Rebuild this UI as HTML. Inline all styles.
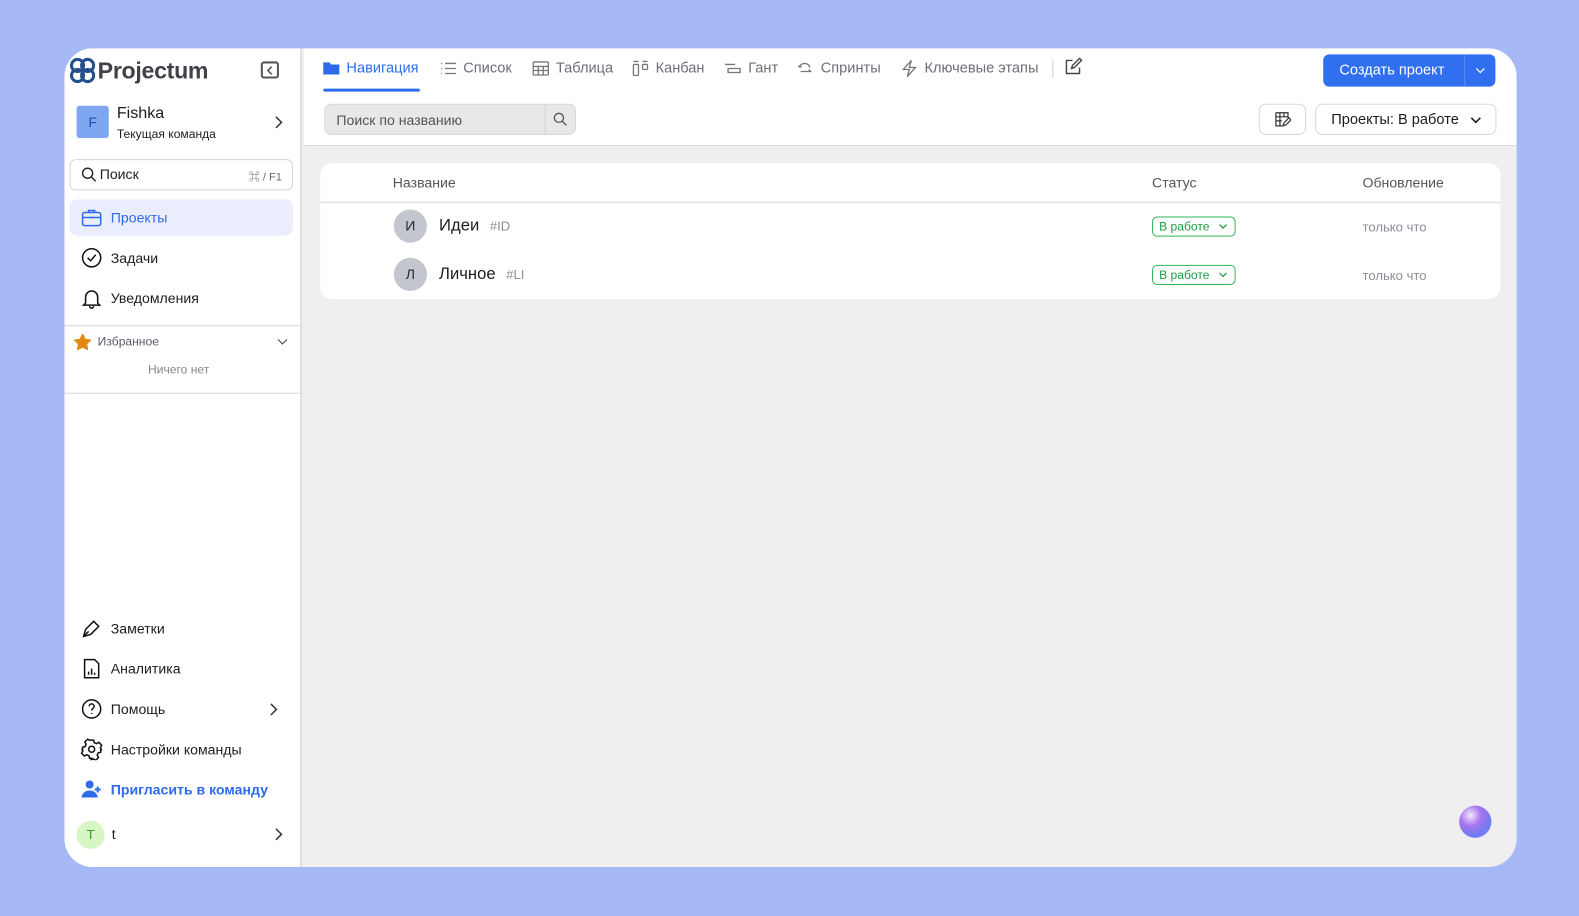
<!DOCTYPE html>
<html><head><meta charset="utf-8"><style>
*{box-sizing:border-box;margin:0;padding:0}
body{width:1579px;height:916px;background:#a6b8f6;font-family:"Liberation Sans","Noto Sans CJK SC",sans-serif;position:relative;overflow:hidden;color:#1d1d1f}
.wrap{position:absolute;left:0;top:0;width:1568px;height:910px;transform:scale(1.00702);transform-origin:0 0}
.win{position:absolute;left:64px;top:48px;width:1442px;height:813px;background:#efefef;border-radius:28px;overflow:hidden}
.side{position:absolute;left:0;top:0;width:236px;height:813px;background:#fff;border-right:2px solid #dedee2}
.abs{position:absolute}
.ni{position:absolute;left:16px;font-size:14px;display:flex;align-items:center;gap:8px}
.ni svg{width:22px;height:22px}
.top{position:absolute;left:238px;top:0;right:0;height:97px;background:#fff;border-bottom:1px solid #dcdce0}
.tab{position:absolute;top:11px;font-size:14.5px;color:#6b6f78;display:flex;align-items:center;gap:6px}
.tab svg{width:18px;height:18px}
.card{position:absolute;left:254px;top:114px;width:1172px;height:135px;background:#fff;border-radius:12px}
.gray{color:#8b8e96}
.badge{position:absolute;left:826px;border:1px solid #2fb457;color:#1f9a46;border-radius:5px;font-size:12px;padding:1px 6px;height:20px;line-height:16px;width:83px}
.badge svg{position:absolute;right:7px;top:6px}
.av{position:absolute;left:73px;width:33px;height:33px;border-radius:50%;background:#c3c6cf;font-size:14px;text-align:center;line-height:33px;color:#2a2a2e}
.chev{position:absolute}
</style></head><body>
<div class="wrap">
<div class="win">
 <div class="side">
  <svg class="abs" style="left:3px;top:8px" width="30" height="28" viewBox="0 0 30 28"><g fill="none" stroke="#234f8c" stroke-width="3"><circle cx="10" cy="9" r="6"/><circle cx="20" cy="9" r="6"/><circle cx="10" cy="19" r="6"/><circle cx="20" cy="19" r="6"/></g></svg>
  <div class="abs" style="left:33px;top:9px;font-size:23px;font-weight:bold;color:#3f4247;letter-spacing:-0.3px">Projectum</div>
  <div class="abs" style="left:195px;top:13px;width:18px;height:17px;border:2px solid #555;border-radius:3px;background:#fff"><svg style="position:absolute;left:4px;top:3px" width="6" height="8" viewBox="0 0 6 8"><path d="M5 0L1 4l4 4" fill="none" stroke="#555" stroke-width="1.6"/></svg></div>
  <div class="abs" style="left:12px;top:57px;width:32px;height:32px;background:#7ea6f1;border-radius:3px;color:#1f4fb8;text-align:center;line-height:32px;font-size:14px">F</div>
  <div class="abs" style="left:52px;top:56px;font-size:16px">Fishka</div>
  <div class="abs" style="left:52px;top:78px;font-size:12px">Текущая команда</div>
  <svg class="chev" style="left:209px;top:67px" width="8" height="13" viewBox="0 0 8 13"><path d="M1 1l5.5 5.5L1 12" fill="none" stroke="#333" stroke-width="1.5"/></svg>
  <div class="abs" style="left:5px;top:110px;width:222px;height:31px;border:1px solid #d5d5da;border-radius:6px"></div>
  <svg class="abs" style="left:17px;top:118px" width="15" height="15" viewBox="0 0 15 15"><circle cx="6" cy="6" r="5" fill="none" stroke="#222" stroke-width="1.4"/><path d="M10 10l4 4" stroke="#222" stroke-width="1.4"/></svg>
  <div class="abs" style="left:35px;top:117px;font-size:14px">Поиск</div>
  <div class="abs" style="left:183px;top:119px;font-size:11px;color:#666">⌘ / F1</div>
  <div class="abs" style="left:5px;top:150px;width:222px;height:36px;background:#eaedfc;border-radius:8px"></div>
  <div class="ni" style="top:157px;color:#2e6bea"><svg viewBox="0 0 22 22" fill="none" stroke="#2e6bea" stroke-width="1.5"><rect x="2" y="6" width="18" height="13" rx="2"/><path d="M8 6V4h6v2M2 11h18M11 10v2"/></svg>Проекты</div>
  <div class="ni" style="top:197px"><svg viewBox="0 0 22 22" fill="none" stroke="#111" stroke-width="1.5"><circle cx="11" cy="11" r="9"/><path d="M7 11l3 3 5-6"/></svg>Задачи</div>
  <div class="ni" style="top:237px"><svg viewBox="0 0 22 22" fill="none" stroke="#111" stroke-width="1.5"><path d="M5 16V10a6 6 0 0112 0v6l2 2H3z M9 19a2 2 0 004 0"/></svg>Уведомления</div>
  <div class="abs" style="left:0;top:275px;width:236px;height:1px;background:#d8d8dc"></div>
  <svg class="abs" style="left:9px;top:283px" width="18" height="17" viewBox="0 0 24 23"><path d="M12 1l3.4 7 7.6 1-5.5 5.3 1.3 7.6L12 18.3 5.2 21.9l1.3-7.6L1 9l7.6-1z" fill="#e08a10" stroke="#e08a10" stroke-linejoin="round" stroke-width="1.5"/></svg>
  <div class="abs" style="left:33px;top:284px;font-size:12px;color:#555a66">Избранное</div>
  <svg class="chev" style="left:211px;top:288px" width="11" height="7" viewBox="0 0 11 7"><path d="M1 1l4.5 4.5L10 1" fill="none" stroke="#555" stroke-width="1.2"/></svg>
  <div class="abs" style="left:83px;top:312px;font-size:12px;color:#888">Ничего нет</div>
  <div class="abs" style="left:0;top:342px;width:236px;height:1px;background:#d8d8dc"></div>
  <div class="ni" style="top:565px"><svg viewBox="0 0 22 22" fill="none" stroke="#111" stroke-width="1.5"><path d="M3 19l2-7 8-8 5 5-8 8z M3 19l5-5"/></svg>Заметки</div>
  <div class="ni" style="top:605px"><svg viewBox="0 0 22 22" fill="none" stroke="#111" stroke-width="1.5"><path d="M4 2h10l4 4v14H4z M8 17v-3M11 17v-6M14 17v-2"/></svg>Аналитика</div>
  <div class="ni" style="top:645px"><svg viewBox="0 0 22 22" fill="none" stroke="#111" stroke-width="1.5"><circle cx="11" cy="11" r="9"/><path d="M8.5 8.5a2.5 2.5 0 115 0c0 2-2.5 2-2.5 4M11 15v1"/></svg>Помощь</div>
  <svg class="chev" style="left:204px;top:650px" width="8" height="13" viewBox="0 0 8 13"><path d="M1 1l5.5 5.5L1 12" fill="none" stroke="#333" stroke-width="1.5"/></svg>
  <div class="ni" style="top:685px"><svg viewBox="0 0 22 22" fill="none" stroke="#111" stroke-width="1.5"><circle cx="11" cy="11" r="3"/><path d="M9 2h4l.6 2.5 2.3 1 2.3-1.3 2.8 2.8-1.3 2.3 1 2.3L20 12v-2 4l-2.5.6-1 2.3 1.3 2.3-2.8 2.8-2.3-1.3-2.3 1L11 20H9l-.6-2.5-2.3-1-2.3 1.3-2.8-2.8 1.3-2.3-1-2.3L2 13V9l2.5-.6 1-2.3L4.2 3.8 7 1 9.3 2.3z"/></svg>Настройки команды</div>
  <div class="ni" style="top:725px;color:#2e6bea;font-weight:bold"><svg viewBox="0 0 22 22" fill="#2e6bea"><circle cx="9" cy="6" r="4"/><path d="M1 19a8 7 0 0116 0z"/><path d="M17 8v6M14 11h6" stroke="#2e6bea" stroke-width="2"/></svg>Пригласить в команду</div>
  <div class="abs" style="left:12px;top:767px;width:28px;height:28px;border-radius:50%;background:#d8f5c4;color:#3a9b22;text-align:center;line-height:28px;font-size:13px">T</div>
  <div class="abs" style="left:47px;top:772px;font-size:14px">t</div>
  <svg class="chev" style="left:209px;top:774px" width="8" height="13" viewBox="0 0 8 13"><path d="M1 1l5.5 5.5L1 12" fill="none" stroke="#333" stroke-width="1.5"/></svg>
 </div>
 <div class="top">
  <div class="tab" style="left:18px;color:#2e6bea"><svg viewBox="0 0 18 18" fill="#2e6bea"><path d="M1 3h6l2 2h8v10H1z"/></svg>Навигация</div>
  <div class="abs" style="left:19px;top:40px;width:96px;height:3px;background:#2e6bea;border-radius:2px"></div>
  <div class="tab" style="left:134px"><svg viewBox="0 0 18 18" stroke="#777" stroke-width="1.3"><path d="M6 4h11M6 9h11M6 14h11M2 4h1M2 9h1M2 14h1"/></svg>Список</div>
  <div class="tab" style="left:226px"><svg viewBox="0 0 18 18" fill="none" stroke="#777" stroke-width="1.3"><rect x="1.5" y="2.5" width="15" height="13" rx="1"/><path d="M1.5 7h15M1.5 11h15M6.5 7v8.5M11.5 7v8.5"/></svg>Таблица</div>
  <div class="tab" style="left:325px"><svg viewBox="0 0 18 18" fill="none" stroke="#777" stroke-width="1.3"><path d="M2 2h5M11 2h5"/><rect x="2" y="5" width="5" height="11" rx="1"/><rect x="11" y="5" width="5" height="5" rx="1"/></svg>Канбан</div>
  <div class="tab" style="left:417px"><svg viewBox="0 0 18 18" fill="none" stroke="#777" stroke-width="1.3"><path d="M1 5h10M4 9h12v4H4z"/></svg>Гант</div>
  <div class="tab" style="left:489px"><svg viewBox="0 0 18 18" fill="none" stroke="#777" stroke-width="1.3"><path d="M3 8a5 4 0 0110 0M3 8l-1-2M3 8l2-1M4 12h10l-2-2"/></svg>Спринты</div>
  <div class="tab" style="left:592px"><svg viewBox="0 0 18 18" fill="none" stroke="#777" stroke-width="1.3"><path d="M11 1L3 10h6l-2 7 8-9H9z"/></svg>Ключевые этапы</div>
  <div class="abs" style="left:743px;top:12px;width:1px;height:17px;background:#ccc"></div>
  <svg class="abs" style="left:755px;top:9px" width="18" height="18" viewBox="0 0 18 18" fill="none" stroke="#444" stroke-width="1.4"><path d="M8 3H2v13h13v-6M7 11l1-3 7-7 2 2-7 7z"/></svg>
  <div class="abs" style="left:1012px;top:6px;width:171px;height:32px;background:#2f6ff0;border-radius:6px;color:#fff;font-size:14.5px"><span style="position:absolute;left:16px;top:8px">Создать проект</span><div style="position:absolute;left:140px;top:0;width:1px;height:32px;background:#5a8cf4"></div><svg style="position:absolute;left:151px;top:13px" width="10" height="6" viewBox="0 0 10 6"><path d="M1 1l4 4 4-4" fill="none" stroke="#fff" stroke-width="1.2"/></svg></div>
  <div class="abs" style="left:20px;top:55px;width:250px;height:31px;background:#e8e8ea;border:1px solid #d8d8dc;border-radius:7px"><span style="position:absolute;left:11px;top:7px;font-size:14px;color:#555">Поиск по названию</span><div style="position:absolute;left:218px;top:0;width:1px;height:29px;background:#d5d5d8"></div><svg style="position:absolute;left:226px;top:7px" width="15" height="15" viewBox="0 0 15 15"><circle cx="6" cy="6" r="4.5" fill="none" stroke="#555" stroke-width="1.3"/><path d="M9.5 9.5l4 4" stroke="#555" stroke-width="1.3"/></svg></div>
  <div class="abs" style="left:948px;top:55px;width:47px;height:31px;border:1px solid #d8d8dc;border-radius:7px"><svg style="position:absolute;left:15px;top:7px" width="16" height="16" viewBox="0 0 16 16" fill="none" stroke="#333" stroke-width="1.2"><path d="M1 1h12v5M1 1v13h6M1 5h12M1 9h6M5 1v13M9 1v4M8 14l1-3 5-5 2 2-5 5z"/></svg></div>
  <div class="abs" style="left:1004px;top:55px;width:180px;height:31px;border:1px solid #d8d8dc;border-radius:7px;font-size:14.5px"><span style="position:absolute;left:15px;top:7px">Проекты: В работе</span><svg style="position:absolute;left:153px;top:12px" width="11" height="7" viewBox="0 0 11 7"><path d="M1 1l4.5 4.5L10 1" fill="none" stroke="#222" stroke-width="1.6"/></svg></div>
 </div>
 <div class="card">
  <div class="abs" style="left:72px;top:11px;font-size:14px;color:#555">Название</div>
  <div class="abs" style="left:826px;top:11px;font-size:14px;color:#555">Статус</div>
  <div class="abs" style="left:1035px;top:11px;font-size:14px;color:#555">Обновление</div>
  <div class="abs" style="left:0;top:38px;width:1172px;height:2px;background:#e6e6e8"></div>
  <div class="av" style="top:46px">И</div>
  <div class="abs" style="left:118px;top:53px;font-size:16.5px">Идеи <span class="gray" style="font-size:13px;margin-left:6px">#ID</span></div>
  <div class="badge" style="top:53px">В работе<svg width="9" height="6" viewBox="0 0 9 6"><path d="M1 1l3.5 3.5L8 1" fill="none" stroke="#1f9a46" stroke-width="1.2"/></svg></div>
  <div class="abs gray" style="left:1035px;top:56px;font-size:13px">только что</div>
  <div class="av" style="top:94px">Л</div>
  <div class="abs" style="left:118px;top:101px;font-size:16.5px">Личное <span class="gray" style="font-size:13px;margin-left:6px">#LI</span></div>
  <div class="badge" style="top:101px">В работе<svg width="9" height="6" viewBox="0 0 9 6"><path d="M1 1l3.5 3.5L8 1" fill="none" stroke="#1f9a46" stroke-width="1.2"/></svg></div>
  <div class="abs gray" style="left:1035px;top:104px;font-size:13px">только что</div>
 </div>
 <div class="abs" style="left:1385px;top:752px;width:32px;height:32px;border-radius:50%;background:radial-gradient(circle at 35% 30%,#f3e8ff 0,#a774ee 35%,#6a7cf2 70%,#c9a8f5 100%)"></div>
</div>
</div>
</body></html>
